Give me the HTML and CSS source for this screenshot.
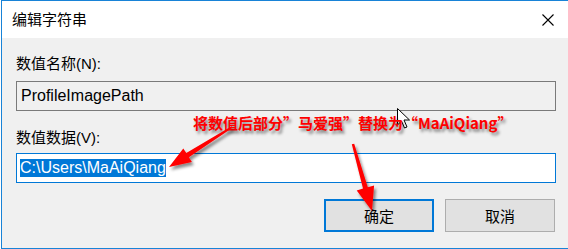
FILE: index.html
```html
<!DOCTYPE html>
<html lang="zh-CN">
<head>
<meta charset="utf-8">
<link rel="stylesheet" href="styles.css">
</head>
<body>
<div class="window">
  <div class="titlebar">
    <span class="title">编辑字符串</span>
    <span class="close">
      <svg width="12" height="12" viewBox="0 0 12 12"><path d="M0.5 0.5 L11.5 11.5 M11.5 0.5 L0.5 11.5" stroke="#000" stroke-width="1.1" fill="none"/></svg>
    </span>
  </div>
  <div class="content">
    <div class="label label-name">数值名称(N):</div>
    <div class="field field-readonly">ProfileImagePath</div>
    <div class="label label-data">数值数据(V):</div>
    <div class="field field-active"><span class="sel">C:\Users\MaAiQiang</span></div>
    <div class="buttons">
      <div class="btn btn-primary">确定</div>
      <div class="btn">取消</div>
    </div>
  </div>
</div>

<svg class="cursor" width="14" height="22" viewBox="0 0 14 22">
  <path d="M0.5 0.5 L0.5 17 L4.5 13 L7.5 20 L10 19 L7 12 L12.5 12 Z" fill="#fff" stroke="#000" stroke-width="1"/>
</svg>

<div class="annotation">将数值后部分”马爱强”替换为“MaAiQiang”</div>

<svg class="arrows" width="568" height="249" viewBox="0 0 568 249">
  <defs>
    <filter id="sh" x="-50%" y="-50%" width="200%" height="200%">
      <feDropShadow dx="2" dy="3" stdDeviation="1.6" flood-color="#000" flood-opacity="0.45"/>
    </filter>
  </defs>
  <polygon filter="url(#sh)" fill="#f00" points="231.5,126.2 186.3,153.1 183.3,148.4 169,167 191.9,161.9 188.9,157.3 232.5,127.8"/>
  <polygon filter="url(#sh)" fill="#f00" points="351.8,144.3 363,188.6 356.7,190.4 372,211 374.1,185.4 367.8,187.2 354.2,143.7"/>
</svg>
</body>
</html>
```

FILE: styles.css
```css
html, body {
  margin: 0;
  padding: 0;
  background: #fff;
}

body {
  width: 568px;
  height: 249px;
  overflow: hidden;
  position: relative;
  font-family: "Liberation Sans", "Noto Sans CJK SC", sans-serif;
}

.window {
  margin-left: 1px;
  height: 249px;
  box-sizing: border-box;
  border-top: 1px solid #1883d7;
  border-left: 1px solid #1883d7;
  border-bottom: 1px solid #1883d7;
  display: flex;
  flex-direction: column;
}

.titlebar {
  height: 37px;
  background: #fff;
  display: flex;
  align-items: center;
  justify-content: space-between;
  padding-left: 10px;
  padding-right: 14px;
}

.title {
  font-family: "Noto Sans CJK SC", sans-serif;
  font-size: 15px;
  line-height: 20px;
  color: #000;
  margin-top: -1px;
}

.close {
  display: flex;
  width: 12px;
  height: 12px;
  margin-top: 1px;
}

.content {
  flex: 1;
  background: #f0f0f0;
  padding: 17px 12px 0 14px;
  display: flex;
  flex-direction: column;
}

.label {
  font-size: 15px;
  line-height: 18px;
  color: #000;
}

.field {
  height: 30px;
  box-sizing: border-box;
  font-size: 16px;
  line-height: 28px;
  color: #000;
  white-space: nowrap;
}

.field-readonly {
  margin-top: 8px;
  border: 1px solid #7a7a7a;
  background: #f0f0f0;
  padding-left: 4px;
}

.label-data {
  margin-top: 18px;
}

.field-active {
  margin-top: 6px;
  border: 1px solid #0078d7;
  background: #fff;
  padding-left: 3px;
  display: flex;
  align-items: center;
}

.sel {
  display: inline-block;
  background: #0078d7;
  color: #fff;
  line-height: 18px;
}

.buttons {
  margin-top: 16px;
  display: flex;
  justify-content: flex-end;
  gap: 11px;
  padding-right: 1px;
}

.btn {
  width: 110px;
  height: 33px;
  box-sizing: border-box;
  background: #e1e1e1;
  border: 1px solid #adadad;
  display: flex;
  align-items: center;
  justify-content: center;
  font-family: "Noto Sans CJK SC", sans-serif;
  font-size: 15px;
  color: #000;
}

.btn-primary {
  border: 2px solid #0078d7;
}

.cursor {
  position: absolute;
  left: 397px;
  top: 108px;
}

.annotation {
  position: absolute;
  left: 193px;
  top: 113px;
  font-family: "Noto Sans CJK SC", sans-serif;
  font-weight: 700;
  font-size: 15px;
  line-height: 20px;
  color: #f00;
  white-space: nowrap;
  text-shadow: 2px 3px 3px rgba(0, 0, 0, 0.45);
}

.arrows {
  position: absolute;
  left: 0;
  top: 0;
  pointer-events: none;
}
```
